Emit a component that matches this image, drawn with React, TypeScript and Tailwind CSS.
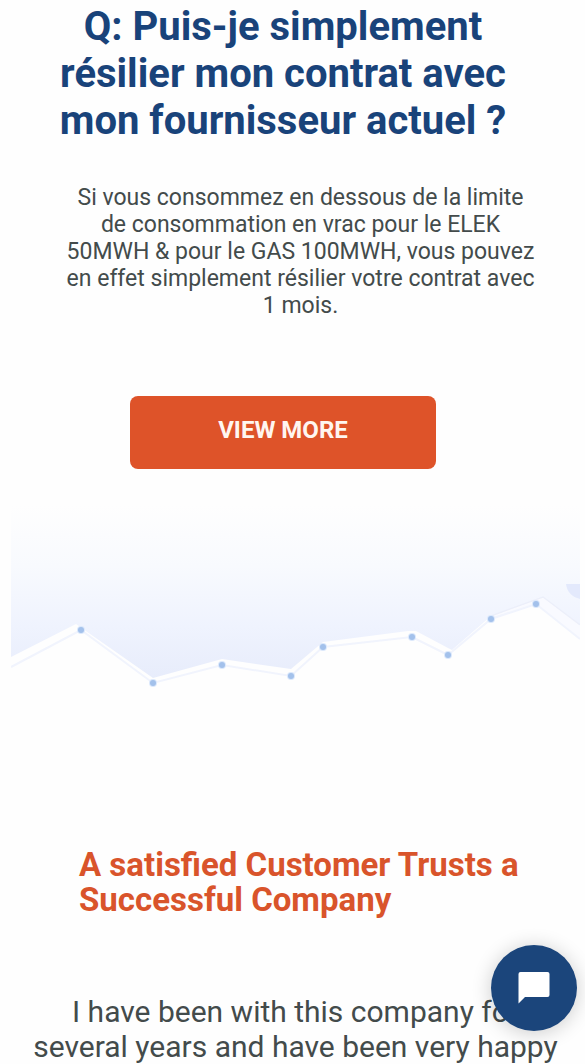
const points = [
  [81, 630],
  [153, 683],
  [222, 665],
  [291, 676],
  [323, 647],
  [412, 637],
  [448, 655],
  [491, 619],
  [536, 604],
];

function TrendBackdrop() {
  return (
    <svg viewBox="11 500 569 200" className="block w-full" aria-hidden="true">
      <defs>
        <linearGradient id="sky" gradientUnits="userSpaceOnUse" x1="0" y1="505" x2="0" y2="680">
          <stop offset="0" stopColor="#fefefe" />
          <stop offset="0.35" stopColor="#f8fafe" />
          <stop offset="0.7" stopColor="#eff3fe" />
          <stop offset="1" stopColor="#e7ecfb" />
        </linearGradient>
      </defs>
      <path
        d="M11 500H580V625L543 597L491 616L452 650L448 648L416 631L408 631L323 642L291 669L222 659L153 678L83 629L76 624L11 657Z"
        fill="url(#sky)"
      />
      <path d="M491 617L543 598L580 626V639L536 604L491 619Z" fill="#f9faff" />
      <path d="M491 616L543 597L580 625" fill="none" stroke="#eceffa" strokeWidth="1.5" />
      <path
        d="M11 667L81 630L153 683L222 665L291 676L323 647L412 637L448 655L491 619L536 604L580 639"
        fill="none"
        stroke="#f1f4fd"
        strokeWidth="2"
      />
      <path d="M566 584H580V599C572 597 567 592 566 584Z" fill="#e3e9fc" />
      {points.map(([x, y]) => (
        <g key={x}>
          <circle cx={x} cy={y} r="4" fill="#dbe8fb" />
          <circle cx={x} cy={y} r="3" fill="#a3c1eb" />
        </g>
      ))}
    </svg>
  );
}

export default function App() {
  return (
    <div className="min-h-screen bg-[#fefefe] font-['Roboto',sans-serif] text-[#434b4b]">
      <main>
        <section className="pt-[3px]">
          <h1 className="pr-[67px] pl-12 text-center text-[40px] leading-[47px] font-bold text-[#19437a]">
            Q: Puis-je simplement résilier mon contrat avec mon fournisseur actuel ?
          </h1>
          <p className="mt-10 pr-12 pl-16 text-center text-[23px] leading-[27px]">
            Si vous consommez en dessous de la limite de consommation en vrac pour le ELEK 50MWH &amp;
            pour le GAS 100MWH, vous pouvez en effet simplement résilier votre contrat avec 1 mois.
          </p>
          <div className="mt-[77px] pr-[149px] pl-[130px]">
            <button
              type="button"
              className="block w-full rounded-lg bg-[#de5329] pt-[21px] pb-[25px] text-center text-[24px] leading-[27px] font-bold text-[#fff6f0]"
            >
              VIEW MORE
            </button>
          </div>
        </section>
        <div className="mt-[31px] pr-[5px] pl-[11px]">
          <TrendBackdrop />
        </div>
        <section className="mt-[147px]">
          <h2 className="pr-14 pl-[79px] text-[33px] leading-[35px] font-bold text-[#d9542b]">
            A satisfied Customer Trusts a Successful Company
          </h2>
          <p className="mt-[77px] pr-6 pl-[30px] text-center text-[30px] leading-[35px]">
            I have been with this company for several years and have been very happy
          </p>
        </section>
      </main>
      <button
        type="button"
        aria-label="Chat"
        className="fixed right-2 bottom-[33px] flex size-[86px] items-center justify-center rounded-full bg-[#1b457b] shadow-[0_2px_20px_rgba(0,0,0,0.2)]"
      >
        <svg viewBox="0 0 32 32" className="size-8 fill-white" aria-hidden="true">
          <path d="M2.500 0H29.500Q31.500 0 31.500 2V23Q31.500 25 29.500 25H7L0.500 31.500V2Q0.500 0 2.500 0Z" />
        </svg>
      </button>
    </div>
  );
}
